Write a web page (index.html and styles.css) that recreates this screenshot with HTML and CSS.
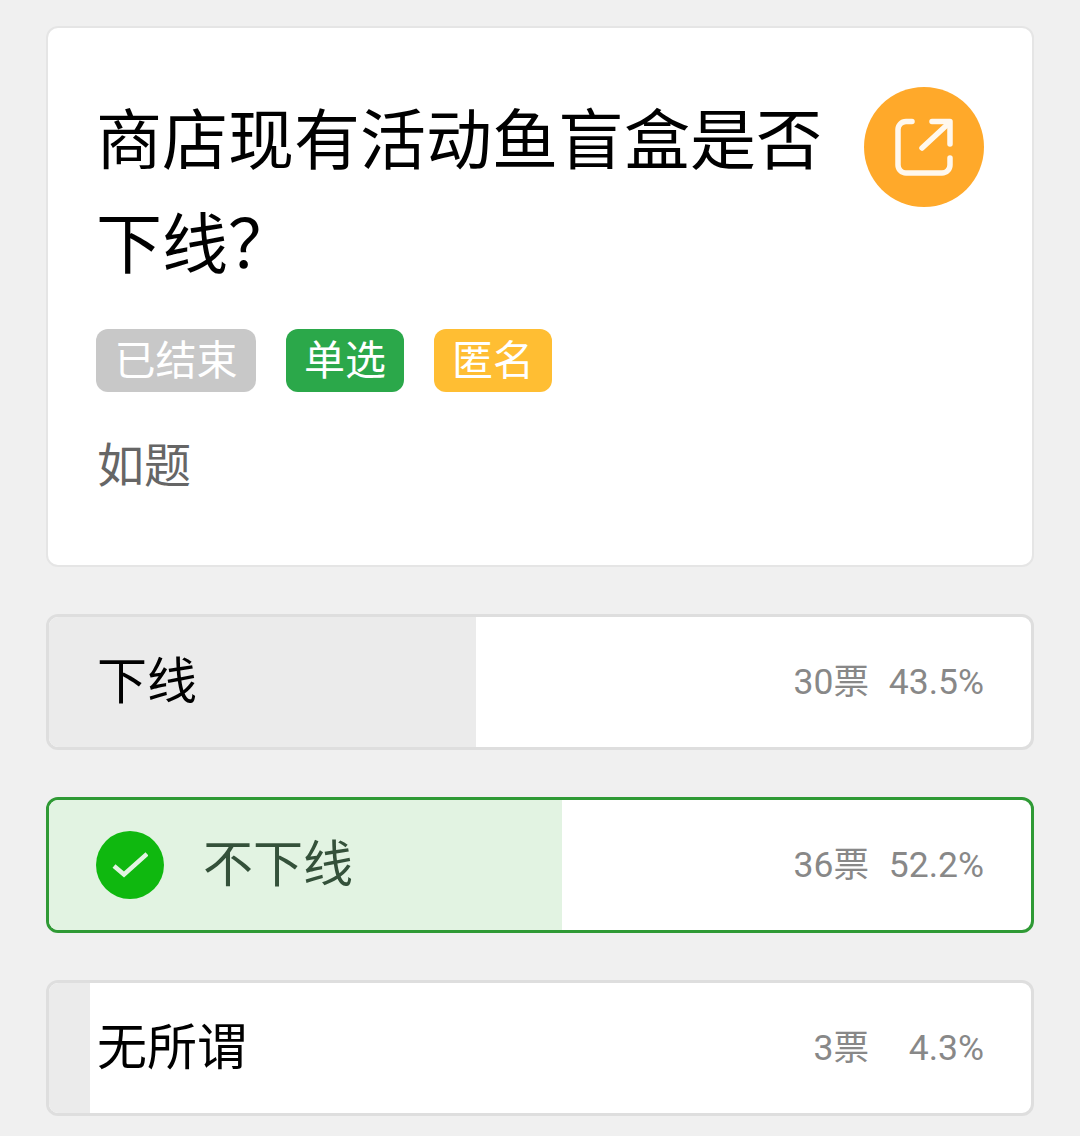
FILE: index.html
```html
<!DOCTYPE html>
<html lang="zh-CN">
<head>
  <meta charset="UTF-8" />
  <meta name="viewport" content="width=device-width, initial-scale=1.0" />
  <title>投票</title>
  <link rel="stylesheet" href="styles.css">
</head>
<body>
  <div class="card">
    <div class="head">
      <h1 class="title">商店现有活动鱼盲盒是否下线？</h1>
      <div class="share">
        <svg width="60" height="60" viewBox="0 0 60 60" fill="none" stroke="#fff8ee" stroke-width="5.500" stroke-linecap="round" stroke-linejoin="round">
          <path d="M18 4.500H12a8 8 0 0 0-8 8V48a8 8 0 0 0 8 8H48a8 8 0 0 0 8-8V41"/>
          <path d="M28 31L55 6"/>
          <path d="M38 4.500H56V27"/>
        </svg>
      </div>
    </div>
    <div class="tags">
      <span class="tag tag-gray">已结束</span>
      <span class="tag tag-green">单选</span>
      <span class="tag tag-yellow">匿名</span>
    </div>
    <p class="desc">如题</p>
  </div>

  <div class="option">
    <div class="fill" style="width: 427px"></div>
    <span class="label">下线</span>
    <span class="votes">30票</span>
    <span class="percent">43.5%</span>
  </div>

  <div class="option selected">
    <div class="fill" style="width: 513px"></div>
    <span class="check">
      <svg width="36" height="28" viewBox="0 0 36 28" fill="none" stroke="#e2f3e2" stroke-width="4.500">
        <path d="M2 15L12 23.500L35 3"/>
      </svg>
    </span>
    <span class="label">不下线</span>
    <span class="votes">36票</span>
    <span class="percent">52.2%</span>
  </div>

  <div class="option">
    <div class="fill" style="width: 41px"></div>
    <span class="label">无所谓</span>
    <span class="votes">3票</span>
    <span class="percent">4.3%</span>
  </div>
</body>
</html>
```

FILE: styles.css
```css
html, body {
  margin: 0;
  padding: 0;
}
body {
  width: 1080px;
  height: 1136px;
  box-sizing: border-box;
  padding: 26px 46px 0;
  background: #f0f0f0;
  font-family: "Noto Sans CJK SC", "Noto Sans", sans-serif;
  overflow: hidden;
}

.card {
  height: 541px;
  box-sizing: border-box;
  padding: 60px 48px 0 48px;
  background: #fff;
  border: 2px solid #e5e5e5;
  border-radius: 12px;
  margin-bottom: 47px;
}
.head {
  display: flex;
  justify-content: space-between;
  align-items: flex-start;
}
.title {
  width: 740px;
  margin: -5px 0 5px 0;
  font-size: 66px;
  font-weight: 400;
  line-height: 104px;
  color: #000;
}
.share {
  width: 120px;
  height: 120px;
  margin-top: -1px;
  border-radius: 50%;
  background: #ffa92a;
  display: flex;
  align-items: center;
  justify-content: center;
}

.tags {
  display: flex;
  gap: 30px;
  margin-top: 33px;
}
.tag {
  height: 63px;
  padding: 0 18px;
  border-radius: 12px;
  color: #fff;
  font-size: 41px;
  line-height: 57px;
}
.tag-gray {
  padding: 0 18.500px;
  background: #c8c8c8;
}
.tag-green { background: #2ba84a; }
.tag-yellow { background: #ffbe33; }

.desc {
  margin: 37px 0 0 1px;
  font-size: 47px;
  line-height: 66px;
  color: #666;
}

.option {
  position: relative;
  height: 136px;
  box-sizing: border-box;
  padding: 0 47px 0 48px;
  display: flex;
  align-items: center;
  background: #fff;
  border: 3px solid #dedede;
  border-radius: 12px;
  margin-bottom: 47px;
  overflow: hidden;
}
.fill {
  position: absolute;
  left: 0;
  top: 0;
  bottom: 0;
  background: #ebebeb;
}
.label {
  position: relative;
  top: -5px;
  flex: 1;
  font-size: 50px;
  color: #000;
}
.votes, .percent {
  position: relative;
  font-family: Roboto, sans-serif, "Noto Sans CJK SC";
  font-size: 35.500px;
  line-height: 44px;
  color: #888;
  text-align: right;
}
.votes { width: 90px; }
.percent { width: 115px; }

.selected {
  border-color: #2f9a35;
  padding-left: 47px;
}
.selected .fill { background: #e2f3e2; }
.selected .label {
  color: #34513a;
  margin-left: 39px;
}
.check {
  position: relative;
  width: 68px;
  height: 68px;
  border-radius: 50%;
  background: #0fb80f;
  display: flex;
  align-items: center;
  justify-content: center;
}
```
